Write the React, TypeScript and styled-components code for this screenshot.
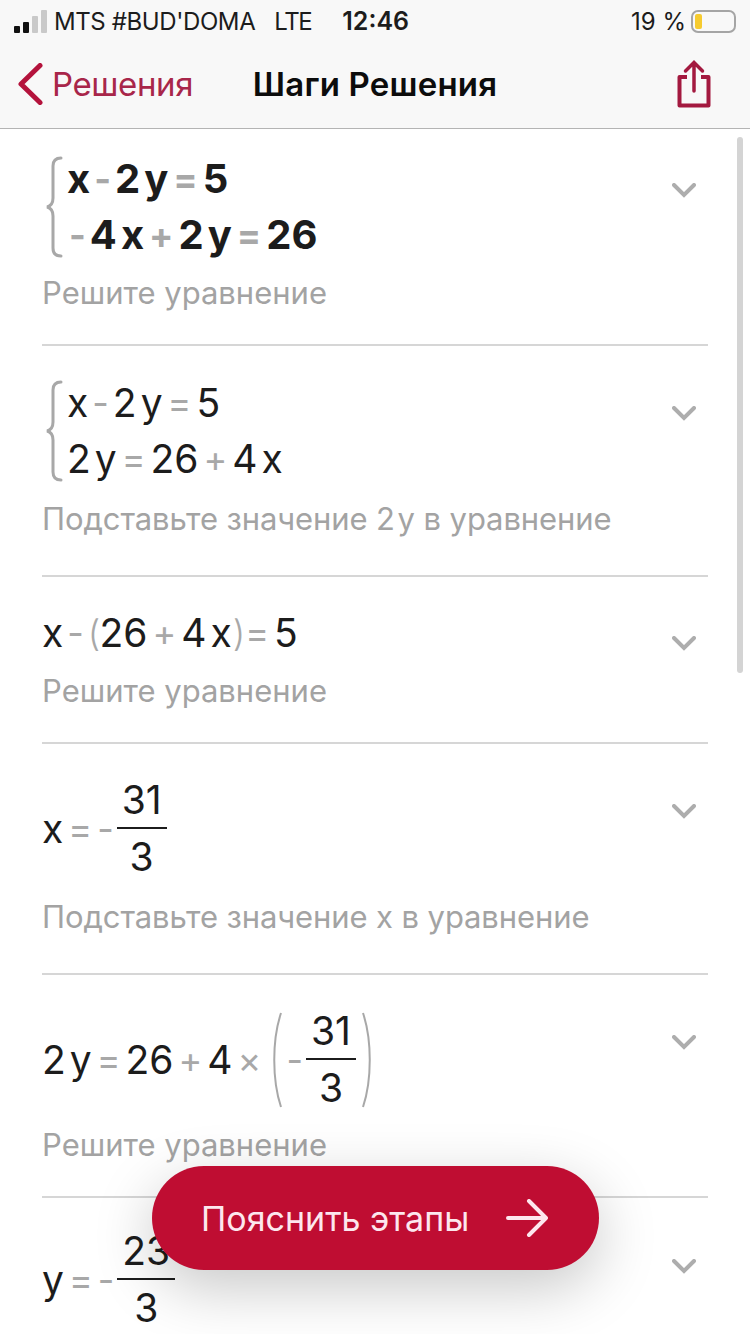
import styled, { createGlobalStyle } from "styled-components";
import type { ReactNode } from "react";

const GlobalStyle = createGlobalStyle`
  html, body {
    margin: 0;
    padding: 0;
    background: #fff;
  }
  body {
    font-family: Inter, "Liberation Sans", sans-serif;
    color: #1a1a1a;
  }
`;

const Screen = styled.div`
  position: relative;
  width: 750px;
  height: 1334px;
  overflow: hidden;
  background: #fff;
`;

const Header = styled.header`
  background: #f8f8f8;
  border-bottom: 1px solid #b4b4b4;
  height: 129px;
  box-sizing: border-box;
  position: relative;
  z-index: 1;
`;

const StatusBar = styled.div`
  height: 40px;
  display: flex;
  align-items: center;
  padding: 2px 14px 0 14px;
  box-sizing: border-box;
  font-size: 24px;
  color: #1c1c1c;
`;

const Signal = styled.div`
  display: flex;
  align-items: flex-end;
  gap: 3px;
  margin-right: 7px;
`;

const SignalBar = styled.span<{ $h: number; $on?: boolean }>`
  width: 6px;
  height: ${(p) => p.$h}px;
  border-radius: 1px;
  background: ${(p) => (p.$on ? "#111" : "#c9c9c9")};
`;

const Carrier = styled.span`
  letter-spacing: -0.4px;
  white-space: nowrap;
`;

const Network = styled.span`
  margin-left: 19px;
  letter-spacing: -1.4px;
`;

const Time = styled.span`
  margin-left: 31px;
  font-size: 25px;
  font-weight: 600;
`;

const Battery = styled.div`
  margin-left: auto;
  display: flex;
  align-items: center;
  gap: 5px;
`;

const BatteryShell = styled.div`
  width: 45px;
  height: 23px;
  box-sizing: border-box;
  border: 2px solid #a5a5a5;
  border-radius: 7px;
  padding: 2px;
  display: flex;
`;

const BatteryFill = styled.div`
  width: 7px;
  background: #f6cb2f;
  border-radius: 2px;
`;

const NavBar = styled.nav`
  display: grid;
  grid-template-columns: 1fr auto 1fr;
  align-items: center;
  height: 88px;
  padding: 0 17px;
`;

const BackLink = styled.div`
  display: flex;
  align-items: center;
  gap: 9px;
  color: #a8264a;
  font-size: 33px;
  letter-spacing: -0.4px;
`;

const Title = styled.div`
  font-size: 33px;
  font-weight: 600;
  color: #0c0c0c;
  letter-spacing: 0.2px;
`;

const ShareButton = styled.div`
  justify-self: end;
  display: flex;
  margin-right: 22px;
`;

const StepList = styled.main`
  margin-top: -8px;
  padding: 0 42px;
`;

const StepRow = styled.section<{ $top: number; $bottom: number }>`
  display: flex;
  justify-content: space-between;
  padding: ${(p) => p.$top}px 0 ${(p) => p.$bottom}px;
  border-bottom: 2px solid #d6d6d6;

  &:last-child {
    border-bottom: 0;
  }
`;

const StepBody = styled.div`
  display: flex;
  flex-direction: column;
  min-width: 0;
`;

const ChevronSlot = styled.div<{ $top: number }>`
  margin: ${(p) => p.$top}px 12px 0 0;
  display: flex;
  flex: none;
  height: 20px;
`;

const Hint = styled.div<{ $gap: number; $tight?: boolean }>`
  margin-top: ${(p) => p.$gap}px;
  color: #a3a3a3;
  font-size: 31px;
  line-height: 36px;
  letter-spacing: ${(p) => (p.$tight ? -0.1 : 0)}px;
  white-space: nowrap;
`;

const SystemBlock = styled.div`
  display: flex;
  align-items: center;
  gap: 4px;
  margin-left: 3px;
`;

const Lines = styled.div`
  display: flex;
  flex-direction: column;
`;

const Expr = styled.div<{ $bold?: boolean }>`
  display: flex;
  align-items: center;
  height: 56px;
  font-size: ${(p) => (p.$bold ? 40 : 39)}px;
  line-height: 56px;
  font-weight: ${(p) => (p.$bold ? 700 : 400)};
  color: #1c1c1c;
  white-space: nowrap;
`;

const Op = styled.span<{ $wide?: boolean }>`
  color: #a8a8a8;
  margin: 0 ${(p) => (p.$wide ? 3 : 2)}px;
  font-size: 36px;
`;

const OpenParen = styled(Op)`
  margin: 0 -3px 0 2px;
  font-weight: 300;
`;

const CloseParen = styled(Op)`
  margin: 0 -3px 0 -1px;
  font-weight: 300;
`;

const Term = styled.span`
  margin: 0 2px;

  &:first-child {
    margin-left: 0;
  }
`;

const FracExpr = styled(Expr)<{ $h: number }>`
  height: ${(p) => p.$h}px;
`;

const Fraction = styled.span`
  display: inline-flex;
  flex-direction: column;
  align-items: center;
  margin: 0 1px;
`;

const Numer = styled.span`
  line-height: 54px;
  padding: 0 5px;
  border-bottom: 2px solid #1c1c1c;
`;

const Denom = styled.span`
  line-height: 56px;
`;

const Paren = styled.svg<{ $left: number; $right: number }>`
  margin: 0 ${(p) => p.$right}px 0 ${(p) => p.$left}px;
`;

const ScrollThumb = styled.div`
  position: absolute;
  top: 137px;
  right: 7px;
  width: 6px;
  height: 536px;
  border-radius: 3px;
  background: #d4d4d4;
`;

const ExplainButton = styled.button`
  position: absolute;
  left: 152px;
  top: 1166px;
  width: 447px;
  height: 104px;
  border: 0;
  border-radius: 52px;
  background: #bf0d32;
  color: #fde7ee;
  font-family: inherit;
  font-size: 34px;
  display: flex;
  align-items: center;
  gap: 37px;
  padding: 0 49px;
  box-sizing: border-box;
  box-shadow: 0 18px 60px rgba(0, 0, 0, 0.22);
  z-index: 2;
  white-space: nowrap;
`;

const BackChevron = () => (
  <svg width="26" height="42" viewBox="0 0 26 42" fill="none">
    <path d="M23 2.500 4 21l19 18.500" stroke="#b4133c" strokeWidth="5" strokeLinecap="round" strokeLinejoin="round" />
  </svg>
);

const ShareIcon = () => (
  <svg width="34" height="48" viewBox="0 0 34 48" fill="none">
    <path d="M10 17H2.500v28.500h29V17H24" stroke="#a3193f" strokeWidth="4" strokeLinejoin="round" />
    <path d="M17 31V3M8.500 11 17 2.500 25.500 11" stroke="#a3193f" strokeWidth="3.500" strokeLinecap="round" />
  </svg>
);

const Chevron = () => (
  <svg width="24" height="16" viewBox="0 0 24 16" fill="none">
    <path d="M2 2 12 12 22 2" stroke="#adadad" strokeWidth="4" strokeLinecap="round" />
  </svg>
);

const Brace = () => (
  <svg width="18" height="102" viewBox="0 0 18 102" fill="none">
    <path
      d="M16 2C10 2 8 5 8 10v32c0 5-2 8-6 9 4 1 6 4 6 9v32c0 5 2 8 8 8"
      stroke="#a8a8a8"
      strokeWidth="3"
      strokeLinecap="round"
    />
  </svg>
);

const ArrowRight = () => (
  <svg width="42" height="38" viewBox="0 0 42 38" fill="none">
    <path d="M2 19h38M23 2l17 17-17 17" stroke="#fde7ee" strokeWidth="4" strokeLinecap="round" strokeLinejoin="round" />
  </svg>
);

const Step = ({
  top,
  bottom,
  gap,
  chevron,
  hint,
  tight,
  children,
}: {
  top: number;
  bottom: number;
  gap: number;
  chevron: number;
  hint?: string;
  tight?: boolean;
  children: ReactNode;
}) => (
  <StepRow $top={top} $bottom={bottom}>
    <StepBody>
      {children}
      {hint && (
        <Hint $gap={gap} $tight={tight}>
          {hint}
        </Hint>
      )}
    </StepBody>
    <ChevronSlot $top={chevron}>
      <Chevron />
    </ChevronSlot>
  </StepRow>
);

const App = () => {
  return (
    <Screen>
      <GlobalStyle />
      <Header>
        <StatusBar>
          <Signal>
            <SignalBar $h={7} $on />
            <SignalBar $h={11} $on />
            <SignalBar $h={17} />
            <SignalBar $h={23} />
          </Signal>
          <Carrier>MTS #BUD'DOMA</Carrier>
          <Network>LTE</Network>
          <Time>12:46</Time>
          <Battery>
            19 %
            <BatteryShell>
              <BatteryFill />
            </BatteryShell>
          </Battery>
        </StatusBar>
        <NavBar>
          <BackLink>
            <BackChevron />
            Решения
          </BackLink>
          <Title>Шаги Решения</Title>
          <ShareButton>
            <ShareIcon />
          </ShareButton>
        </NavBar>
      </Header>

      <StepList>
        <Step top={30} bottom={33} gap={12} chevron={32} hint="Решите уравнение">
          <SystemBlock>
            <Brace />
            <Lines>
              <Expr $bold>
                <Term>x</Term>
                <Op>-</Op>
                <Term>2</Term>
                <Term>y</Term>
                <Op $wide>=</Op>
                <Term>5</Term>
              </Expr>
              <Expr $bold>
                <Op>-</Op>
                <Term>4</Term>
                <Term>x</Term>
                <Op $wide>+</Op>
                <Term>2</Term>
                <Term>y</Term>
                <Op $wide>=</Op>
                <Term>26</Term>
              </Expr>
            </Lines>
          </SystemBlock>
        </Step>

        <Step top={29} bottom={38} gap={14} chevron={31} tight hint={"Подставьте значение 2\u200Ay в уравнение"}>
          <SystemBlock>
            <Brace />
            <Lines>
              <Expr>
                <Term>x</Term>
                <Op>-</Op>
                <Term>2</Term>
                <Term>y</Term>
                <Op $wide>=</Op>
                <Term>5</Term>
              </Expr>
              <Expr>
                <Term>2</Term>
                <Term>y</Term>
                <Op $wide>=</Op>
                <Term>26</Term>
                <Op $wide>+</Op>
                <Term>4</Term>
                <Term>x</Term>
              </Expr>
            </Lines>
          </SystemBlock>
        </Step>

        <Step top={28} bottom={33} gap={12} chevron={31} hint="Решите уравнение">
          <Expr>
            <Term>x</Term>
            <Op>-</Op>
            <OpenParen>(</OpenParen>
            <Term>26</Term>
            <Op $wide>+</Op>
            <Term>4</Term>
            <Term>x</Term>
            <CloseParen>)</CloseParen>
            <Op $wide>=</Op>
            <Term>5</Term>
          </Expr>
        </Step>

        <Step top={30} bottom={38} gap={15} chevron={30} tight hint="Подставьте значение x в уравнение">
          <FracExpr $h={110}>
            <Term>x</Term>
            <Op $wide>=</Op>
            <Op>-</Op>
            <Fraction>
              <Numer>31</Numer>
              <Denom>3</Denom>
            </Fraction>
          </FracExpr>
        </Step>

        <Step top={30} bottom={33} gap={12} chevron={30} hint="Решите уравнение">
          <FracExpr $h={110}>
            <Term>2</Term>
            <Term>y</Term>
            <Op $wide>=</Op>
            <Term>26</Term>
            <Op $wide>+</Op>
            <Term>4</Term>
            <Op $wide>×</Op>
            <Paren $left={5} $right={1} width="14" height="96" viewBox="0 0 14 96" fill="none">
              <path d="M12 1C3 28 3 68 12 95" stroke="#a8a8a8" strokeWidth="2" />
            </Paren>
            <Op>-</Op>
            <Fraction>
              <Numer>31</Numer>
              <Denom>3</Denom>
            </Fraction>
            <Paren $left={4} $right={0} width="14" height="96" viewBox="0 0 14 96" fill="none">
              <path d="M2 1c9 27 9 67 0 94" stroke="#a8a8a8" strokeWidth="2" />
            </Paren>
          </FracExpr>
        </Step>

        <Step top={27} bottom={0} gap={12} chevron={34}>
          <FracExpr $h={110}>
            <Term>y</Term>
            <Op $wide>=</Op>
            <Op>-</Op>
            <Fraction>
              <Numer>23</Numer>
              <Denom>3</Denom>
            </Fraction>
          </FracExpr>
        </Step>
      </StepList>

      <ScrollThumb />
      <ExplainButton>
        Пояснить этапы
        <ArrowRight />
      </ExplainButton>
    </Screen>
  );
};

export default App;
